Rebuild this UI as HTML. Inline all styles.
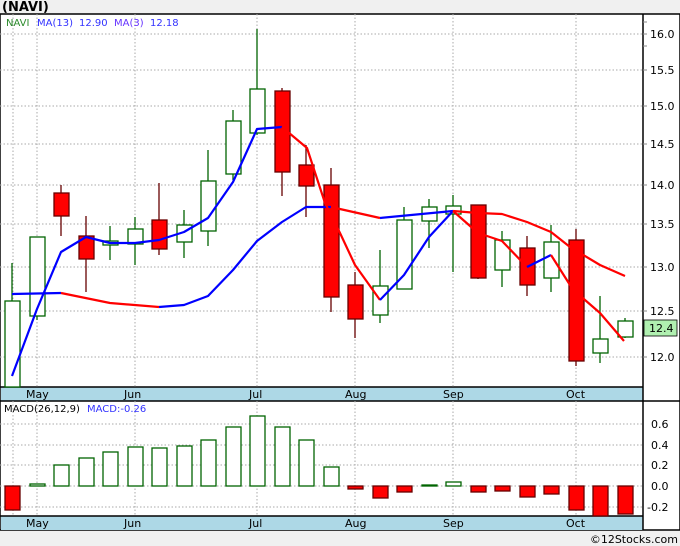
<!DOCTYPE html><html><head><meta charset="utf-8"><style>
body{margin:0;background:#f0f0f0;width:680px;height:546px;overflow:hidden;font-family:"DejaVu Sans","Liberation Sans",sans-serif}
svg{display:block}
</style></head><body>
<svg width="680" height="546" viewBox="0 0 680 546" xmlns="http://www.w3.org/2000/svg" font-family="DejaVu Sans, Liberation Sans, sans-serif">
<rect x="0" y="0" width="680" height="546" fill="#f0f0f0"/>
<text x="2" y="11" font-size="13" font-weight="bold" fill="#000">(NAVI)</text>
<rect x="0" y="14" width="680" height="516" fill="#fff" stroke="#000" stroke-width="1.5"/>
<!-- bands -->
<rect x="1" y="387" width="642" height="14" fill="#add8e6"/>
<rect x="1" y="516" width="642" height="14" fill="#add8e6"/>
<line x1="0" y1="387" x2="643" y2="387" stroke="#000" stroke-width="1.5"/>
<line x1="0" y1="401" x2="680" y2="401" stroke="#000" stroke-width="1.5"/>
<line x1="0" y1="516" x2="643" y2="516" stroke="#000" stroke-width="1.5"/>
<line x1="643" y1="14" x2="643" y2="530" stroke="#000" stroke-width="1.5"/>
<g font-size="11" fill="#000">
<text x="26" y="398">May</text><text x="124" y="398">Jun</text><text x="249" y="398">Jul</text><text x="345" y="398">Aug</text><text x="443" y="398">Sep</text><text x="566" y="398">Oct</text>
<text x="26" y="527">May</text><text x="124" y="527">Jun</text><text x="249" y="527">Jul</text><text x="345" y="527">Aug</text><text x="443" y="527">Sep</text><text x="566" y="527">Oct</text>
</g>
<!-- grid -->
<g stroke="#aaa" stroke-dasharray="1.5,2" stroke-width="1">
<line x1="0" y1="34" x2="643" y2="34"/><line x1="0" y1="70" x2="643" y2="70"/><line x1="0" y1="106" x2="643" y2="106"/><line x1="0" y1="144" x2="643" y2="144"/><line x1="0" y1="185" x2="643" y2="185"/><line x1="0" y1="224" x2="643" y2="224"/><line x1="0" y1="267" x2="643" y2="267"/><line x1="0" y1="311" x2="643" y2="311"/><line x1="0" y1="357" x2="643" y2="357"/>
<line x1="0" y1="424" x2="643" y2="424"/><line x1="0" y1="445" x2="643" y2="445"/><line x1="0" y1="465" x2="643" y2="465"/><line x1="0" y1="486" x2="643" y2="486"/><line x1="0" y1="507" x2="643" y2="507"/>
<g>
<line x1="13" y1="14" x2="13" y2="387"/><line x1="37" y1="14" x2="37" y2="387"/><line x1="135" y1="14" x2="135" y2="387"/><line x1="257" y1="14" x2="257" y2="387"/><line x1="355" y1="14" x2="355" y2="387"/><line x1="453" y1="14" x2="453" y2="387"/><line x1="576" y1="14" x2="576" y2="387"/>
<line x1="13" y1="401" x2="13" y2="516"/><line x1="37" y1="401" x2="37" y2="516"/><line x1="135" y1="401" x2="135" y2="516"/><line x1="257" y1="401" x2="257" y2="516"/><line x1="355" y1="401" x2="355" y2="516"/><line x1="453" y1="401" x2="453" y2="516"/><line x1="576" y1="401" x2="576" y2="516"/>
</g></g>
<!-- axis labels -->
<g font-size="11" fill="#000">
<text x="650" y="38">16.0</text><text x="650" y="74">15.5</text><text x="650" y="110">15.0</text><text x="650" y="148">14.5</text><text x="650" y="189">14.0</text><text x="650" y="228">13.5</text><text x="650" y="271">13.0</text><text x="650" y="315">12.5</text><text x="650" y="361">12.0</text>
<text x="651" y="428">0.6</text><text x="651" y="449">0.4</text><text x="651" y="469">0.2</text><text x="651" y="490">0.0</text><text x="647" y="511">-0.2</text>
</g>
<g stroke="#888" stroke-width="1">
<line x1="643" y1="22" x2="647" y2="22"/><line x1="643" y1="34" x2="647" y2="34"/><line x1="643" y1="46" x2="647" y2="46"/><line x1="643" y1="70" x2="647" y2="70"/><line x1="643" y1="106" x2="647" y2="106"/><line x1="643" y1="144" x2="647" y2="144"/><line x1="643" y1="185" x2="647" y2="185"/><line x1="643" y1="224" x2="647" y2="224"/><line x1="643" y1="267" x2="647" y2="267"/><line x1="643" y1="311" x2="647" y2="311"/><line x1="643" y1="357" x2="647" y2="357"/>
</g>
<rect x="644" y="320" width="33" height="16" fill="#b0f0b0" stroke="#000" stroke-width="0.8"/>
<text x="649" y="332" font-size="11" fill="#000">12.4</text>
<!-- legend -->
<g font-size="10">
<text x="6" y="26" fill="#2a8a2a">NAVI</text><text x="37" y="26" fill="#3333ff">MA(13)</text><text x="79" y="26" fill="#3333ff">12.90</text><text x="114" y="26" fill="#6633ff">MA(3)</text><text x="150" y="26" fill="#3333ff">12.18</text>
<text x="4" y="412" fill="#000">MACD(26,12,9)</text><text x="87" y="412" fill="#3333ff">MACD:-0.26</text>
</g>
<!-- wicks -->
<g stroke="#006400" stroke-width="1.3">
<line x1="12" y1="263" x2="12" y2="387"/><line x1="37" y1="237" x2="37" y2="320"/><line x1="110" y1="226" x2="110" y2="260"/><line x1="135" y1="217" x2="135" y2="265"/><line x1="184" y1="210" x2="184" y2="258"/><line x1="208" y1="150" x2="208" y2="246"/><line x1="233" y1="110" x2="233" y2="180"/><line x1="257" y1="29" x2="257" y2="135"/><line x1="380" y1="250" x2="380" y2="323"/><line x1="404" y1="207" x2="404" y2="289"/><line x1="429" y1="199" x2="429" y2="248"/><line x1="453" y1="195" x2="453" y2="272"/><line x1="502" y1="231" x2="502" y2="287"/><line x1="551" y1="225" x2="551" y2="292"/><line x1="600" y1="296" x2="600" y2="363"/><line x1="625" y1="318" x2="625" y2="338"/>
</g>
<g stroke="#600" stroke-width="1.3">
<line x1="61" y1="185" x2="61" y2="236"/><line x1="86" y1="216" x2="86" y2="292"/><line x1="159" y1="183" x2="159" y2="255"/><line x1="282" y1="88" x2="282" y2="196"/><line x1="306" y1="145" x2="306" y2="217"/><line x1="331" y1="168" x2="331" y2="312"/><line x1="355" y1="272" x2="355" y2="338"/><line x1="478" y1="205" x2="478" y2="279"/><line x1="527" y1="236" x2="527" y2="296"/><line x1="576" y1="229" x2="576" y2="366"/>
</g>
<!-- bodies -->
<g fill="#fff" stroke="#006400" stroke-width="1.3">
<rect x="5" y="301" width="15" height="86"/><rect x="30" y="237" width="15" height="79"/><rect x="103" y="241" width="15" height="4"/><rect x="128" y="229" width="15" height="15"/><rect x="177" y="225" width="15" height="17"/><rect x="201" y="181" width="15" height="50"/><rect x="226" y="121" width="15" height="53"/><rect x="250" y="89" width="15" height="44"/><rect x="373" y="286" width="15" height="29"/><rect x="397" y="220" width="15" height="69"/><rect x="422" y="207" width="15" height="14"/><rect x="446" y="206" width="15" height="8"/><rect x="495" y="240" width="15" height="30"/><rect x="544" y="242" width="15" height="36"/><rect x="593" y="339" width="15" height="14"/><rect x="618" y="321" width="15" height="16"/>
</g>
<g fill="#f00" stroke="#600" stroke-width="1.3">
<rect x="54" y="193" width="15" height="23"/><rect x="79" y="236" width="15" height="23"/><rect x="152" y="220" width="15" height="29"/><rect x="275" y="91" width="15" height="81"/><rect x="299" y="165" width="15" height="21"/><rect x="324" y="185" width="15" height="112"/><rect x="348" y="285" width="15" height="34"/><rect x="471" y="205" width="15" height="73"/><rect x="520" y="248" width="15" height="37"/><rect x="569" y="240" width="15" height="121"/>
</g>
<!-- MAs -->
<g fill="none" stroke-width="2.2" stroke-linejoin="round">
<polyline stroke="#00f" points="12,294 61,293"/>
<polyline stroke="#f00" points="61,293 110,303 159,307"/>
<polyline stroke="#00f" points="159,307 184,305 208,296 233,270 257,241 282,222 306,207 331,207"/>
<polyline stroke="#f00" points="331,207 380,218"/>
<polyline stroke="#00f" points="380,218 453,211"/>
<polyline stroke="#f00" points="453,211 478,213 502,214 527,222 551,232 570,247 600,265 625,276"/>
<polyline stroke="#00f" points="12,376 37,309 61,252 86,237 110,243 135,243 159,240 184,232 208,218 233,182 257,129 282,127"/>
<polyline stroke="#f00" points="282,127 307,148 325,203 340,233 355,265 380,300"/>
<polyline stroke="#00f" points="380,300 404,275 429,237 453,211"/>
<polyline stroke="#f00" points="453,211 478,233 502,241 527,267"/>
<polyline stroke="#00f" points="527,267 551,255"/>
<polyline stroke="#f00" points="551,255 570,285 585,300 600,313 624,341"/>
</g>
<!-- MACD -->
<g fill="#fff" stroke="#006400" stroke-width="1.3">
<rect x="30" y="484" width="15" height="2"/><rect x="54" y="465" width="15" height="21"/><rect x="79" y="458" width="15" height="28"/><rect x="103" y="452" width="15" height="34"/><rect x="128" y="447" width="15" height="39"/><rect x="152" y="448" width="15" height="38"/><rect x="177" y="446" width="15" height="40"/><rect x="201" y="440" width="15" height="46"/><rect x="226" y="427" width="15" height="59"/><rect x="250" y="416" width="15" height="70"/><rect x="275" y="427" width="15" height="59"/><rect x="299" y="440" width="15" height="46"/><rect x="324" y="467" width="15" height="19"/><rect x="422" y="485" width="15" height="1"/><rect x="446" y="482" width="15" height="4"/>
</g>
<g fill="#f00" stroke="#600" stroke-width="1.3">
<rect x="5" y="486" width="15" height="24"/><rect x="348" y="486" width="15" height="3"/><rect x="373" y="486" width="15" height="12"/><rect x="397" y="486" width="15" height="6"/><rect x="471" y="486" width="15" height="6"/><rect x="495" y="486" width="15" height="5"/><rect x="520" y="486" width="15" height="11"/><rect x="544" y="486" width="15" height="8"/><rect x="569" y="486" width="15" height="24"/><rect x="593" y="486" width="15" height="30"/><rect x="618" y="486" width="15" height="28"/>
</g>
<text x="678" y="543" font-size="11" fill="#000" text-anchor="end">©12Stocks.com</text>
</svg>
</body></html>
